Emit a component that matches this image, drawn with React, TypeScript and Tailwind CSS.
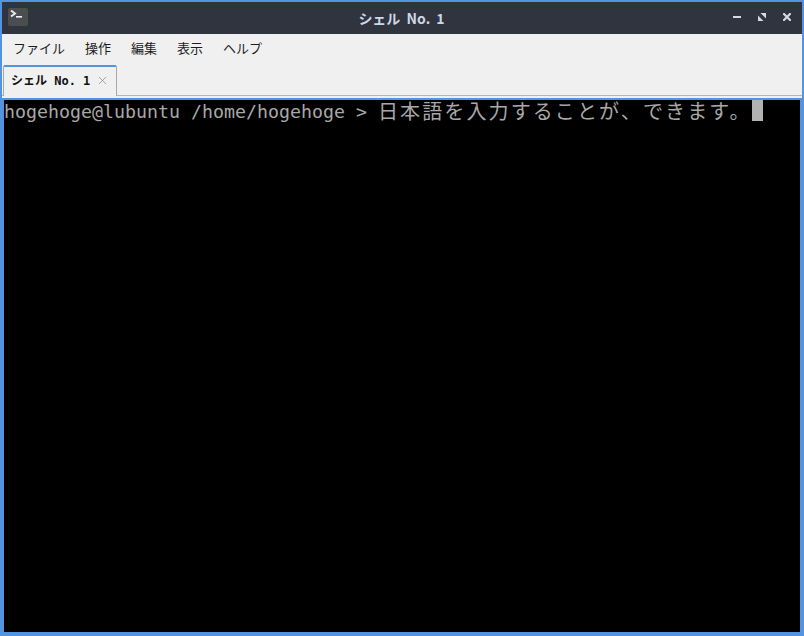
import { X } from "lucide-react";

const uiFont = "font-['Noto_Sans_CJK_JP','Liberation_Sans',sans-serif]";
const monoFont = "font-['DejaVu_Sans_Mono','Noto_Sans_CJK_JP',monospace]";
const menus = ["ファイル", "操作", "編集", "表示", "ヘルプ"];

function TitleBar() {
  return (
    <div className="grid h-8 shrink-0 grid-cols-[1fr_auto_1fr] items-center bg-[#2f343f] pl-[6px] pr-[11px]">
      <div className="mb-[2px] h-[18px] w-5 rounded-[2px] bg-[#4b4d50]">
        <svg width="20" height="18" viewBox="0 0 20 18">
          <path d="M3 2.5 L7 5.5 L3 8.5" fill="none" stroke="#e8e8e8" strokeWidth="2" />
          <rect x="8" y="8" width="6" height="1.6" fill="#f4f4f4" />
        </svg>
      </div>
      <div className={`pl-1 text-center text-[14px] font-bold text-[#cfd6e6] [word-spacing:3px] ${uiFont}`}>シェル No. 1</div>
      <div className="mb-[2px] flex items-center justify-end gap-[17px]">
        <svg width="8" height="8" viewBox="0 0 8 8">
          <rect x="0" y="3" width="8" height="2" fill="#d3dae3" />
        </svg>
        <svg width="8" height="8" viewBox="0 0 8 8">
          <path d="M2.5 0 H8 V5.5 Z M0 2.5 L5.5 8 H0 Z" fill="#d3dae3" />
        </svg>
        <svg width="8" height="8" viewBox="0 0 8 8">
          <path d="M1 1 L7 7 M7 1 L1 7" stroke="#d3dae3" strokeWidth="2.2" strokeLinecap="square" />
        </svg>
      </div>
    </div>
  );
}

function MenuBar() {
  return (
    <div className={`flex h-[26px] shrink-0 items-center gap-5 bg-[#f0f0f0] px-[11px] pt-[2px] text-[13px] text-[#1c1c1c] ${uiFont}`}>
      {menus.map((m) => (
        <span key={m}>{m}</span>
      ))}
    </div>
  );
}

function TabBar() {
  return (
    <div className="mb-[2px] flex h-[36px] shrink-0 items-end border-b border-[#b5b5b5] bg-[#f0f0f0] pl-px">
      <div className="mb-[-1px] flex h-[31px] w-[114px] items-center gap-[6px] rounded-t-[2px] border-x border-t-2 border-[#a8a8a8] border-t-[#5294e2] bg-[#f0f0f0] pb-[2px] pl-[7px]">
        <span className={`text-[12px] font-bold text-[#111] ${monoFont}`}>シェル No. 1</span>
        <X size={13} strokeWidth={1} className="text-[#666]" />
      </div>
    </div>
  );
}

function Terminal() {
  return (
    <div className={`flex-1 border-2 border-[#5294e2] bg-black text-[18.27px] leading-[22px] text-[#a8a8a8] ${monoFont}`}>
      <div className="flex items-start whitespace-pre">
        <span className="pt-px">hogehoge@lubuntu /home/hogehoge &gt; </span>
        <span className="pt-px text-[20px] tracking-[2.12px]">日本語を入力することが、できます。</span>
        <span className="h-[21px] w-[11px] bg-[#b2b2b2]" />
      </div>
    </div>
  );
}

export default function App() {
  return (
    <div className="flex h-[636px] w-[804px] flex-col overflow-hidden border-2 border-[#5294e2] bg-[#f0f0f0]">
      <TitleBar />
      <MenuBar />
      <TabBar />
      <Terminal />
    </div>
  );
}
